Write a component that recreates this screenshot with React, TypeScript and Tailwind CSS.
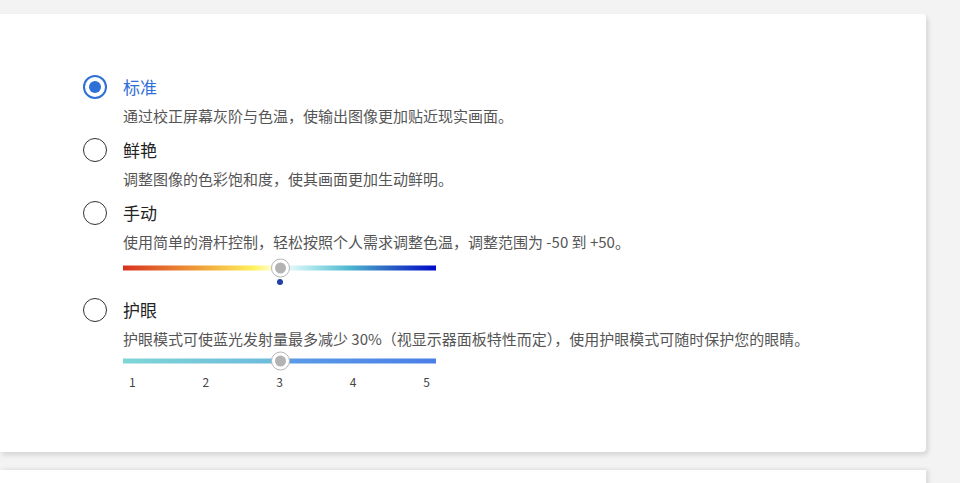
import React from 'react';

const FONT = "font-['Microsoft_YaHei','Noto_Sans_CJK_SC',sans-serif]";

function Radio({ checked }: { checked?: boolean }) {
  return checked ? (
    <span className="flex h-[24px] w-[24px] shrink-0 items-center justify-center rounded-full border-2 border-[#2f6fd8]">
      <span className="h-[12px] w-[12px] rounded-full bg-[#2f6fd8]" />
    </span>
  ) : (
    <span className="h-[24px] w-[24px] shrink-0 rounded-full border-[1.5px] border-[#333]" />
  );
}

function Thumb() {
  return (
    <span className="absolute left-[148px] top-1/2 flex h-[19px] w-[19px] -translate-y-1/2 items-center justify-center rounded-full border-[1.5px] border-[#b5b5b5] bg-white">
      <span className="h-[11px] w-[11px] rounded-full bg-[#b3b3b3]" />
    </span>
  );
}

function Option({ label, desc, checked, children }: { label: string; desc: string; checked?: boolean; children?: React.ReactNode }) {
  return (
    <div className="flex flex-col">
      <div className="flex h-[24px] items-center gap-[16px]">
        <Radio checked={checked} />
        <span className={`text-[17px] leading-[24px] ${checked ? 'text-[#2f6fd8]' : 'text-[#222]'}`}>{label}</span>
      </div>
      <p className="mt-[7px] pl-[40px] text-[15px] leading-[20px] text-[#555]">{desc}</p>
      {children}
    </div>
  );
}

export default function App() {
  return (
    <div className={`min-h-[483px] w-[960px] overflow-hidden bg-[#f3f3f3] pt-[14px] ${FONT}`}>
      <div className="w-[926px] rounded-r-[4px] bg-white pb-[62px] pl-[83px] pt-[61px] shadow-[2px_3px_5px_rgba(0,0,0,0.13)]">
        <div className="flex flex-col gap-[12px]">
          <Option label="标准" desc="通过校正屏幕灰阶与色温，使输出图像更加贴近现实画面。" checked />
          <Option label="鲜艳" desc="调整图像的色彩饱和度，使其画面更加生动鲜明。" />
          <Option label="手动" desc="使用简单的滑杆控制，轻松按照个人需求调整色温，调整范围为 -50 到 +50。">
            <div className="relative ml-[40px] mt-[6px] h-[20px] w-[313px]">
              <div className="absolute left-0 right-0 top-1/2 h-[5px] -translate-y-1/2 bg-[linear-gradient(to_right,#d7321e_0%,#f0a23a_25%,#fff35e_42%,#ffffff_50%,#a9e6ec_60%,#4fb9cf_72%,#2a63c4_85%,#0008c8_100%)]" />
              <Thumb />
              <span className="absolute left-[154px] top-[21px] h-[6px] w-[6px] rounded-full bg-[#1f3fa8]" />
            </div>
          </Option>
          <div className="mt-[8px]">
            <Option label="护眼" desc="护眼模式可使蓝光发射量最多减少 30%（视显示器面板特性而定），使用护眼模式可随时保护您的眼睛。">
              <div className="relative ml-[40px] mt-[2px] h-[20px] w-[313px]">
                <div className="absolute left-0 right-0 top-1/2 h-[5px] -translate-y-1/2 bg-[linear-gradient(to_right,#7fd6d6_0%,#6cbbdc_48%,#5a9ce6_52%,#4a7ee6_100%)]" />
                <Thumb />
              </div>
              <div className="ml-[40px] mt-[3px] flex w-[313px] justify-between px-[6px] text-[12px] leading-[16px] text-[#444]">
                <span>1</span>
                <span>2</span>
                <span>3</span>
                <span>4</span>
                <span>5</span>
              </div>
            </Option>
          </div>
        </div>
      </div>
      <div className="mt-[18px] h-[40px] w-[926px] bg-white shadow-[2px_0_5px_rgba(0,0,0,0.13)]" />
    </div>
  );
}
